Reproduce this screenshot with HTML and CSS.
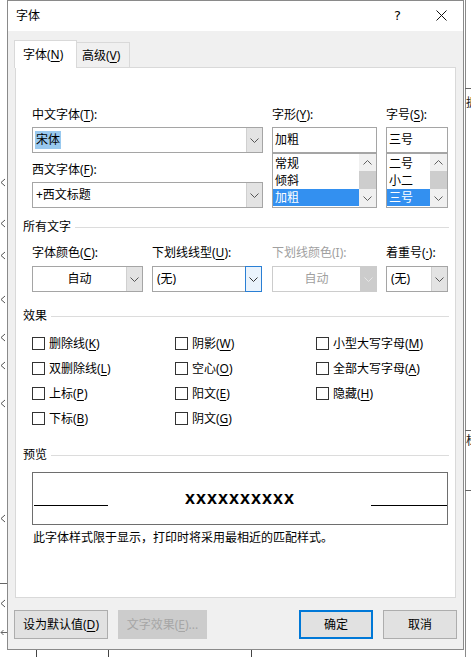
FILE: index.html
```html
<!DOCTYPE html>
<html lang="zh-CN">
<head>
<meta charset="utf-8">
<title>字体</title>
<link rel="stylesheet" href="styles.css">
</head>
<body>
<div class="desk">
  <div class="doc-marks">
    <svg class="mk mk1" width="6" height="9" viewBox="0 0 6 9"><path d="M5 1L1 4.5L5 8" fill="none" stroke="#555"/></svg>
    <svg class="mk mk2" width="6" height="9" viewBox="0 0 6 9"><path d="M5 1L1 4.5L5 8" fill="none" stroke="#555"/></svg>
    <svg class="mk mk3" width="6" height="9" viewBox="0 0 6 9"><path d="M5 1L1 4.5L5 8" fill="none" stroke="#555"/></svg>
    <svg class="mk mk4" width="6" height="9" viewBox="0 0 6 9"><path d="M5 1L1 4.5L5 8" fill="none" stroke="#555"/></svg>
    <svg class="mk mk5" width="6" height="9" viewBox="0 0 6 9"><path d="M5 1L1 4.5L5 8" fill="none" stroke="#555"/></svg>
    <svg class="mk mk6" width="6" height="9" viewBox="0 0 6 9"><path d="M5 1L1 4.5L5 8" fill="none" stroke="#555"/></svg>
    <svg class="mk mk7" width="6" height="9" viewBox="0 0 6 9"><path d="M5 1L1 4.5L5 8" fill="none" stroke="#555"/></svg>
    <svg class="mk mk8" width="6" height="9" viewBox="0 0 6 9"><path d="M5 1L1 4.5L5 8" fill="none" stroke="#555"/></svg>
    <svg class="mk mk9" width="6" height="9" viewBox="0 0 6 9"><path d="M5 1L1 4.5L5 8" fill="none" stroke="#555"/></svg>
    <div class="hline hl-left"></div>
    <svg class="mk mk-arrow" width="7" height="7" viewBox="0 0 7 7"><path d="M7 3.5H1M3.5 1L1 3.5L3.5 6" fill="none" stroke="#666"/></svg>
    <div class="vline vl-right"></div>
    <div class="hline hl-r1"></div>
    <div class="hline hl-r2"></div>
    <div class="hline hl-r3"></div>
    <div class="edge-clip ec1"><span class="edge-char">据</span></div>
    <div class="edge-clip ec2"><span class="edge-char">楫</span></div>
    <div class="vline vl-b1"></div>
    <div class="vline vl-b2"></div>
    <div class="vline vl-b3"></div>
  </div>

  <div class="dialog">
    <div class="titlebar">
      <span class="title">字体</span>
      <span class="help">?</span>
      <svg class="close" width="11" height="11" viewBox="0 0 11 11"><path d="M0.5 0.5L10.5 10.5M10.5 0.5L0.5 10.5" fill="none" stroke="#111" stroke-width="1"/></svg>
    </div>
    <div class="dlg-body">
      <div class="tabs">
        <div class="tab tab-on">字体(<u>N</u>)</div>
        <div class="tab tab-off">高级(<u>V</u>)</div>
      </div>
      <div class="panel">
        <div class="font-row">
          <div class="fcol fcol-a">
            <div class="lbl">中文字体(<u>T</u>):</div>
            <div class="combo combo-a">
              <div class="combo-text"><span class="sel-text">宋体</span></div>
              <div class="drop"><svg width="9" height="5" viewBox="0 0 9 5"><path d="M0.5 0.5L4.5 4.5L8.5 0.5" fill="none" stroke="#555"/></svg></div>
            </div>
            <div class="lbl lbl-gap">西文字体(<u>F</u>):</div>
            <div class="combo combo-a">
              <div class="combo-text">+西文标题</div>
              <div class="drop"><svg width="9" height="5" viewBox="0 0 9 5"><path d="M0.5 0.5L4.5 4.5L8.5 0.5" fill="none" stroke="#555"/></svg></div>
            </div>
          </div>
          <div class="fcol fcol-b">
            <div class="lbl">字形(<u>Y</u>):</div>
            <div class="textbox">加粗</div>
            <div class="listbox">
              <div class="items">
                <div class="item">常规</div>
                <div class="item">倾斜</div>
                <div class="item item-on">加粗</div>
              </div>
              <div class="vscroll">
                <div class="sb-btn"><svg width="9" height="5" viewBox="0 0 9 5"><path d="M0.5 4.5L4.5 0.5L8.5 4.5" fill="none" stroke="#606060"/></svg></div>
                <div class="sb-thumb"></div>
                <div class="sb-btn sb-dn"><svg width="9" height="5" viewBox="0 0 9 5"><path d="M0.5 0.5L4.5 4.5L8.5 0.5" fill="none" stroke="#606060"/></svg></div>
              </div>
            </div>
          </div>
          <div class="fcol fcol-c">
            <div class="lbl">字号(<u>S</u>):</div>
            <div class="textbox">三号</div>
            <div class="listbox">
              <div class="items">
                <div class="item">二号</div>
                <div class="item">小二</div>
                <div class="item item-on">三号</div>
              </div>
              <div class="vscroll">
                <div class="sb-btn"><svg width="9" height="5" viewBox="0 0 9 5"><path d="M0.5 4.5L4.5 0.5L8.5 4.5" fill="none" stroke="#606060"/></svg></div>
                <div class="sb-thumb"></div>
                <div class="sb-btn sb-dn"><svg width="9" height="5" viewBox="0 0 9 5"><path d="M0.5 0.5L4.5 4.5L8.5 0.5" fill="none" stroke="#606060"/></svg></div>
              </div>
            </div>
          </div>
        </div>

        <div class="group group-first">所有文字</div>
        <div class="attr-row">
          <div class="acol acol-1">
            <div class="lbl">字体颜色(<u>C</u>):</div>
            <div class="combo combo-1 combo-center">
              <div class="combo-text">自动</div>
              <div class="drop"><svg width="9" height="5" viewBox="0 0 9 5"><path d="M0.5 0.5L4.5 4.5L8.5 0.5" fill="none" stroke="#555"/></svg></div>
            </div>
          </div>
          <div class="acol acol-2">
            <div class="lbl">下划线线型(<u>U</u>):</div>
            <div class="combo combo-2 combo-focus">
              <div class="combo-text combo-pad">(无)</div>
              <div class="drop"><svg width="9" height="5" viewBox="0 0 9 5"><path d="M0.5 0.5L4.5 4.5L8.5 0.5" fill="none" stroke="#333"/></svg></div>
            </div>
          </div>
          <div class="acol acol-3">
            <div class="lbl lbl-dis">下划线颜色(I):</div>
            <div class="combo combo-3 combo-center combo-dis">
              <div class="combo-text">自动</div>
              <div class="drop"><svg width="9" height="5" viewBox="0 0 9 5"><path d="M0.5 0.5L4.5 4.5L8.5 0.5" fill="none" stroke="#e6e6e6"/></svg></div>
            </div>
          </div>
          <div class="acol acol-4">
            <div class="lbl">着重号(<u>·</u>):</div>
            <div class="combo combo-4">
              <div class="combo-text combo-pad">(无)</div>
              <div class="drop"><svg width="9" height="5" viewBox="0 0 9 5"><path d="M0.5 0.5L4.5 4.5L8.5 0.5" fill="none" stroke="#555"/></svg></div>
            </div>
          </div>
        </div>

        <div class="group">效果</div>
        <div class="checks">
          <div class="chk"><span class="box"></span><span>删除线(<u>K</u>)</span></div>
          <div class="chk"><span class="box"></span><span>阴影(<u>W</u>)</span></div>
          <div class="chk"><span class="box"></span><span>小型大写字母(<u>M</u>)</span></div>
          <div class="chk"><span class="box"></span><span>双删除线(<u>L</u>)</span></div>
          <div class="chk"><span class="box"></span><span>空心(<u>O</u>)</span></div>
          <div class="chk"><span class="box"></span><span>全部大写字母(<u>A</u>)</span></div>
          <div class="chk"><span class="box"></span><span>上标(<u>P</u>)</span></div>
          <div class="chk"><span class="box"></span><span>阳文(<u>E</u>)</span></div>
          <div class="chk"><span class="box"></span><span>隐藏(<u>H</u>)</span></div>
          <div class="chk"><span class="box"></span><span>下标(<u>B</u>)</span></div>
          <div class="chk"><span class="box"></span><span>阴文(<u>G</u>)</span></div>
        </div>

        <div class="group">预览</div>
        <div class="preview">
          <div class="pv-line pv-left"></div>
          <div class="pv-text">xxxxxxxxxx</div>
          <div class="pv-line pv-right"></div>
        </div>
        <div class="note">此字体样式限于显示，打印时将采用最相近的匹配样式。</div>
      </div>

      <div class="buttons">
        <div class="btn btn-def"><span>设为默认值(<u>D</u>)</span></div>
        <div class="btn btn-fx"><span>文字效果(<u>E</u>)...</span></div>
        <div class="btn btn-ok"><span>确定</span></div>
        <div class="btn btn-cancel"><span>取消</span></div>
      </div>
    </div>
  </div>
</div>
</body>
</html>
```

FILE: styles.css
```css
* { box-sizing: border-box; margin: 0; padding: 0; }
html, body { width: 471px; height: 657px; overflow: hidden; background: #fff; }
body {
  font-family: "Noto Sans", "Noto Sans CJK SC", sans-serif;
  font-size: 12px;
  line-height: 16px;
  color: #000;
}
u { text-decoration: underline; text-decoration-thickness: 1px; text-underline-offset: 2px; }

.desk { position: relative; width: 471px; height: 657px; background: #fff; overflow: hidden; }

/* document behind the dialog */
.mk { position: absolute; left: 0; display: block; }
.mk1 { top: 178px; }
.mk2 { top: 219px; }
.mk3 { top: 251px; }
.mk4 { top: 295px; }
.mk5 { top: 333px; }
.mk6 { top: 361px; }
.mk7 { top: 399px; }
.mk8 { top: 514px; }
.mk9 { top: 599px; }
.mk-arrow { top: 629px; }
.hline { position: absolute; height: 1px; background: #666; }
.hl-left { left: 0; top: 583px; width: 7px; }
.hl-r1 { left: 465px; top: 88px; width: 6px; }
.hl-r2 { left: 465px; top: 430px; width: 6px; }
.hl-r3 { left: 465px; top: 490px; width: 6px; }
.vline { position: absolute; width: 1px; background: #444; }
.vl-right { left: 465px; top: 0; height: 657px; background: #8a8a8a; }
.vl-b1 { left: 36px; top: 649px; height: 8px; }
.vl-b2 { left: 108px; top: 649px; height: 8px; }
.vl-b3 { left: 251px; top: 649px; height: 8px; }
.edge-clip { position: absolute; left: 466px; width: 5px; height: 14px; overflow: hidden; }
.edge-char { display: block; font-family: "Noto Sans CJK SC", sans-serif; font-size: 12px; line-height: 14px; color: #222; }
.ec1 { top: 95px; }
.ec2 { top: 433px; }

/* dialog window */
.dialog {
  position: absolute;
  left: 7px;
  top: 0;
  width: 457px;
  height: 650px;
  border: 1px solid #8a8a8a;
  background: #f0f0f0;
  display: flex;
  flex-direction: column;
}
.titlebar {
  height: 30px;
  flex: none;
  background: #fff;
  display: flex;
  align-items: center;
  padding: 0 16px 0 8px;
}
.title { line-height: 28px; }
.help {
  margin-left: auto;
  margin-right: 35px;
  font-family: "DejaVu Sans", sans-serif;
  font-size: 13px;
  line-height: 28px;
}
.close { display: block; margin-top: -2px; }

.dlg-body { flex: 1; padding: 9px 7px 10px 7px; display: flex; flex-direction: column; }

.tabs { display: flex; align-items: flex-start; height: 27px; margin-left: -1px; flex: none; }
.tab { border: 1px solid #d9d9d9; border-bottom: none; white-space: nowrap; }
.tab-on {
  width: 63px;
  height: 28px;
  background: #fff;
  position: relative;
  z-index: 1;
  padding: 1px 0 0 8px;
  line-height: 26px;
}
.tab-off {
  width: 53px;
  height: 25px;
  margin-top: 2px;
  border-left: none;
  padding: 2px 0 0 5px;
  line-height: 22px;
}

.panel {
  height: 531px;
  flex: none;
  background: #fff;
  border: 1px solid #d9d9d9;
  padding: 39px 6px 0 7px;
}

.lbl { height: 16px; line-height: 16px; margin-bottom: 4px; white-space: nowrap; }
.lbl-gap { margin-top: 9px; }
.lbl-dis { color: #a0a0a0; }

.font-row { display: flex; margin-left: 9px; }
.fcol-a { width: 240px; }
.fcol-b { width: 114px; }
.fcol-c { width: 62px; }
.combo-a { width: 231px; }
.fcol-b .textbox, .fcol-b .listbox { width: 105px; }
.fcol-c .textbox, .fcol-c .listbox { width: 62px; }

.combo {
  height: 26px;
  border: 1px solid #a5a5a5;
  background: #fff;
  display: flex;
}
.combo-text { flex: 1; display: flex; align-items: center; padding-left: 3px; white-space: nowrap; }
.combo-pad { padding-left: 4px; }
.combo-center .combo-text { justify-content: center; padding-left: 0; }
.drop {
  width: 16px;
  flex: none;
  background: #e3e3e3;
  border-left: 1px solid #d0d0d0;
  display: flex;
  align-items: center;
  justify-content: center;
}
.sel-text { background: #99c9ef; padding: 1px 1px; line-height: 16px; margin-left: -1px; }

.combo-focus .drop { border: 1px solid #2a7fd4; background: #eaf3fc; margin: -1px -1px -1px 0; width: 17px; }
.combo-dis { border-color: #cccccc; color: #a0a0a0; }
.combo-dis .drop { background: #cccccc; border-left-color: #cccccc; }

.textbox {
  height: 26px;
  border: 1px solid #a5a5a5;
  background: #fff;
  padding-left: 2px;
  line-height: 24px;
  white-space: nowrap;
}
.listbox {
  height: 55px;
  border: 1px solid #a5a5a5;
  background: #fff;
  display: flex;
}
.items { flex: 1; padding-top: 1px; min-width: 0; }
.item { height: 17px; line-height: 17px; padding-left: 2px; white-space: nowrap; }
.item-on { background: #3390f0; color: #fff; }
.vscroll { width: 17px; flex: none; background: #f0f0f0; display: flex; flex-direction: column; }
.sb-btn { height: 17px; display: flex; align-items: center; justify-content: center; }
.sb-dn { height: 18px; }
.sb-thumb { height: 18px; background: #cdcdcd; }

.group {
  display: flex;
  align-items: center;
  gap: 4px;
  height: 16px;
  line-height: 16px;
  margin-top: 16px;
  white-space: nowrap;
}
.group::after { content: ""; flex: 1; height: 1px; background: #dcdcdc; }
.group-first { margin-top: 11px; }

.attr-row { display: flex; margin: 10px 0 0 9px; }
.attr-row .lbl { margin-bottom: 5px; }
.acol-1, .acol-2 { width: 120px; }
.acol-3 { width: 114px; }
.acol-4 { width: 62px; }
.combo-1 { width: 111px; }
.combo-2 { width: 110px; }
.combo-3 { width: 105px; }
.combo-4 { width: 62px; }

.checks {
  display: grid;
  grid-template-columns: 143px 141px 1fr;
  grid-auto-rows: 25px;
  margin: 7px 0 0 9px;
}
.chk { display: flex; align-items: center; gap: 4px; white-space: nowrap; }
.box { width: 13px; height: 13px; border: 1px solid #333; background: #fff; flex: none; }

.preview {
  margin: 9px 0 0 9px;
  width: 416px;
  height: 53px;
  border: 1px solid #6e6e6e;
  display: flex;
  align-items: flex-start;
}
.pv-line { height: 1px; background: #000; margin-top: 32px; flex: none; }
.pv-left { width: 74px; margin-left: 1px; }
.pv-right { width: 76px; }
.pv-text {
  flex: 1;
  text-align: center;
  font-family: "Liberation Sans", Arial, sans-serif;
  font-weight: bold;
  font-size: 18px;
  letter-spacing: 1px;
  text-indent: 1px;
  line-height: 20px;
  margin-top: 15px;
}
.note { margin: 5px 0 0 10px; white-space: nowrap; }

.buttons { display: flex; margin: 12px -1px 0 -1px; height: 29px; flex: none; }
.btn {
  height: 29px;
  border: 1px solid #adadad;
  background: #e1e1e1;
  display: flex;
  align-items: center;
  justify-content: center;
  white-space: nowrap;
}
.btn-def { width: 94px; }
.btn-fx { width: 89px; margin-left: 10px; background: #cccccc; border-color: #cccccc; color: #a6a6a6; }
.btn-ok { width: 74px; margin-left: auto; border: 2px solid #0078d7; }
.btn-cancel { width: 74px; margin-left: 10px; }
```
